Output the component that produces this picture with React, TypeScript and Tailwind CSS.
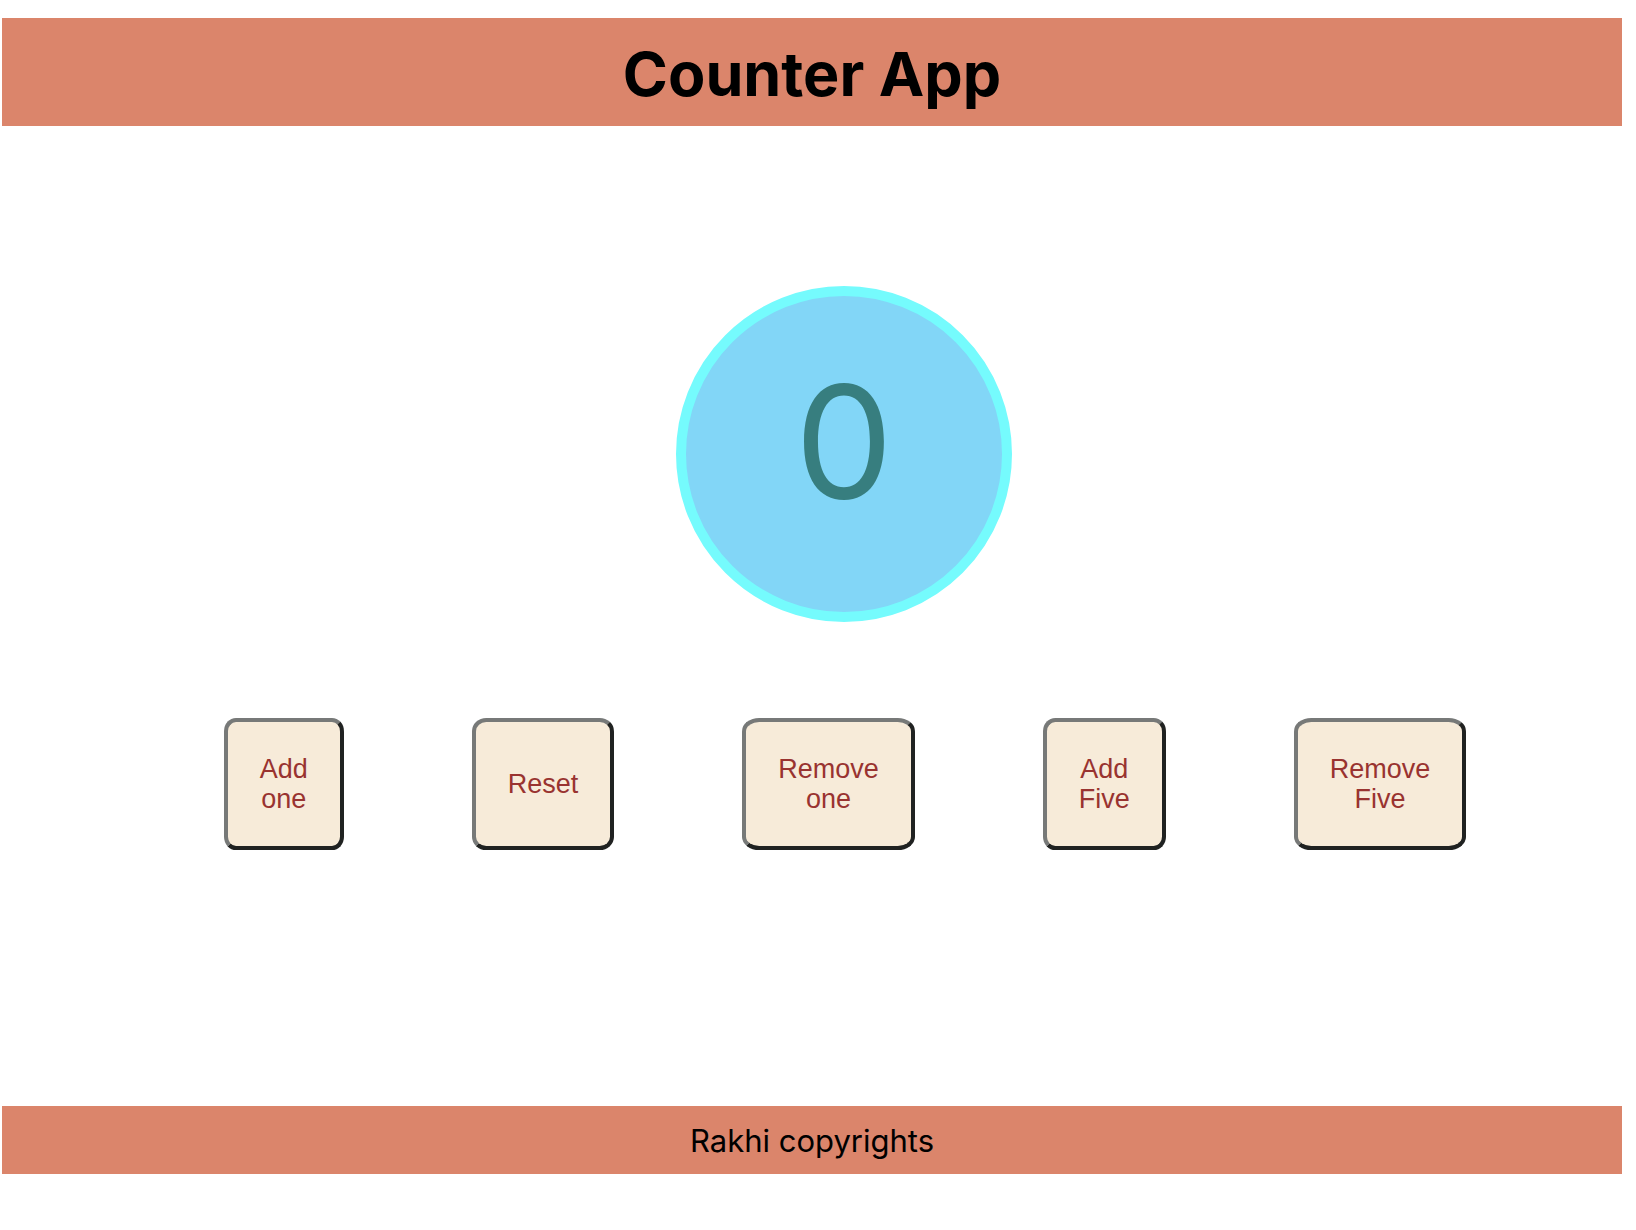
import { useState } from "react";

type Action = { label: string; run: (count: number) => number };

const actions: Action[] = [
  { label: "Add one", run: (c) => c + 1 },
  { label: "Reset", run: () => 0 },
  { label: "Remove one", run: (c) => c - 1 },
  { label: "Add Five", run: (c) => c + 5 },
  { label: "Remove Five", run: (c) => c - 5 },
];

export default function App() {
  const [count, setCount] = useState(0);

  return (
    <div className="min-h-screen bg-white pt-[18px] pr-[14px] pl-[2px] font-['Inter',sans-serif] text-black">
      <header className="bg-[#db856b] pt-[18px] pb-[14px] text-center">
        <h1 className="text-[61px] leading-[76px] font-bold">Counter App</h1>
      </header>

      <main className="flex flex-col items-center pt-40 pb-64 pl-16">
        <output className="flex size-[336px] items-center justify-center rounded-full border-10 border-[#75fbfd] bg-[#82d6f7] pb-6 text-[156px] leading-none text-[#377e7f]">
          {count}
        </output>
        <div className="mt-24 flex justify-center gap-32 pl-0.5">
          {actions.map((action) => (
            <button
              key={action.label}
              type="button"
              onClick={() => setCount(action.run)}
              className="h-[132px] w-min rounded-[10%] border-4 border-t-[#777978] border-r-[#202221] border-b-[#202221] border-l-[#777978] bg-[#f7ebd9] px-8 font-['Liberation_Sans',Arial,sans-serif] text-[27px] leading-[30px] text-[#993330]"
            >
              {action.label}
            </button>
          ))}
        </div>
      </main>

      <footer className="bg-[#db856b] pt-4 pb-[14px] text-center text-[31px] leading-[38px]">
        <p>Rakhi copyrights</p>
      </footer>
    </div>
  );
}
